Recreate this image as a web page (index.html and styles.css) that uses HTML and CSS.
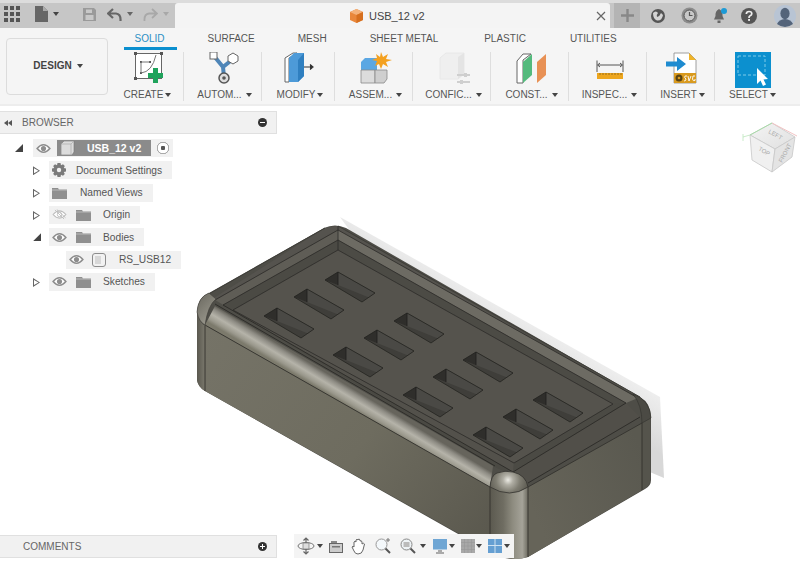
FILE: index.html
```html
<!DOCTYPE html>
<html lang="en">
<head>
<meta charset="utf-8">
<title>USB_12 v2</title>
<link rel="stylesheet" href="styles.css">
</head>
<body>
<svg class="defs" width="0" height="0" aria-hidden="true">
  <defs>
    <symbol id="eye" viewBox="0 0 16 12">
      <path d="M1 6 Q8 -2 15 6 Q8 14 1 6Z" fill="#fff" stroke="#8d8d8d" stroke-width="1.6"/>
      <circle cx="8" cy="6" r="2.8" fill="#8d8d8d"/>
    </symbol>
    <symbol id="eye-off" viewBox="0 0 16 12">
      <path d="M1 6 Q8 -2 15 6 Q8 14 1 6Z" fill="#fff" stroke="#bdbdbd" stroke-width="1.2"/>
      <circle cx="8" cy="6" r="2.4" fill="none" stroke="#bdbdbd"/>
      <path d="M3 1 L13 11 M5 0.5 L14.5 9.5" stroke="#bdbdbd" stroke-width="1"/>
    </symbol>
    <symbol id="folder" viewBox="0 0 15 12">
      <path d="M0 1 H6 L7 2.5 H15 V12 H0Z" fill="#8f8f8f"/>
      <path d="M0 3 H15" stroke="#c4c4c4" stroke-width=".8"/>
    </symbol>
    <symbol id="slot" viewBox="0 0 52 32" overflow="visible">
      <path d="M0 10 L13 2 L50 23 L37 32Z" fill="#3f3e3a"/>
      <path d="M0 10 L13 2 V15Z" fill="#2f2e2b"/>
      <path d="M13 2 L50 23 L44 27.500 L13 15Z" fill="#4a4945"/>
      <path d="M0 10 L13 2 L50 23 L37 32Z" fill="none" stroke="#232320" stroke-width=".8"/>
      <path d="M13 2 V15" stroke="#1f1f1c" stroke-width=".8"/>
    </symbol>
  </defs>
</svg>

<header class="topbar">
  <div class="quick">
    <svg class="ic-grid" width="16" height="16" viewBox="0 0 16 16"><g fill="#555"><rect x="0" y="0" width="4" height="4"/><rect x="6" y="0" width="4" height="4"/><rect x="12" y="0" width="4" height="4"/><rect x="0" y="6" width="4" height="4"/><rect x="6" y="6" width="4" height="4"/><rect x="12" y="6" width="4" height="4"/><rect x="0" y="12" width="4" height="4"/><rect x="6" y="12" width="4" height="4"/><rect x="12" y="12" width="4" height="4"/></g></svg>
    <svg class="ic-file" width="13" height="16" viewBox="0 0 13 16"><path d="M0 0 H8 L13 5 V16 H0Z" fill="#666"/><path d="M8 0 V5 H13" fill="#aaa"/></svg>
    <span class="caret dark c-file"></span>
    <svg class="ic-save" width="13" height="13" viewBox="0 0 13 13"><path d="M0 0 H11 L13 2 V13 H0Z" fill="#9a9a9a"/><rect x="3" y="1.500" width="6" height="3.500" fill="#c8c8c8"/><rect x="2.500" y="7" width="8" height="5" fill="#c8c8c8"/></svg>
    <svg class="ic-undo" width="15" height="13" viewBox="0 0 15 13"><path d="M6 1 L1 5.500 L6 10 M1 5.500 H9 Q14 6 13.500 13" fill="none" stroke="#666" stroke-width="2.200"/></svg>
    <span class="caret c-undo"></span>
    <svg class="ic-redo" width="15" height="13" viewBox="0 0 15 13"><path d="M9 1 L14 5.500 L9 10 M14 5.500 H6 Q1 6 1.500 13" fill="none" stroke="#a8a8a8" stroke-width="1.800"/></svg>
    <span class="caret faint c-redo"></span>
  </div>
  <div class="doc-tab">
    <svg class="ic-cube" width="13" height="14" viewBox="0 0 13 14"><path d="M6.500 0 L13 3 V11 L6.500 14 L0 11 V3Z" fill="#e9873a"/><path d="M6.500 0 L13 3 L6.500 6 L0 3Z" fill="#f4b27a"/><path d="M6.500 6 L13 3 V11 L6.500 14Z" fill="#d66f1e"/></svg>
    <span class="doc-title">USB_12 v2</span>
    <svg class="ic-close" width="10" height="10" viewBox="0 0 10 10"><path d="M1 1 L9 9 M9 1 L1 9" stroke="#666" stroke-width="1.200"/></svg>
  </div>
  <div class="new-tab"><svg width="13" height="13" viewBox="0 0 13 13"><path d="M6.500 0 V13 M0 6.500 H13" stroke="#888" stroke-width="2.400"/></svg></div>
  <div class="account">
    <svg width="16" height="16" viewBox="0 0 16 16"><circle cx="8" cy="8" r="7" fill="#555"/><path d="M3 5 Q6 2 8 5 Q6 7 7 9 Q10 8 11 5 L13 7 Q12 13 7 12.500 Q3 11 3 5Z" fill="#d4d4d4"/></svg>
    <svg class="gap-clock" width="17" height="17" viewBox="0 0 17 17"><circle cx="8.500" cy="8.500" r="8" fill="#8c8c8c"/><circle cx="8.500" cy="8.500" r="5.500" fill="#c8c8c8" stroke="#555" stroke-width="1"/><path d="M8.500 5 V8.500 H11.500" fill="none" stroke="#555" stroke-width="1.200"/></svg>
    <svg class="gap-bell" width="15" height="17" viewBox="0 0 15 17"><path d="M6 2 Q2 4 2.500 9 L1 12.500 H11 L9.500 9 Q10 4 6 2Z" fill="#666"/><rect x="4.500" y="13.500" width="3" height="2.500" fill="#666"/><circle cx="11" cy="4" r="3" fill="#1c9ad6"/></svg>
    <svg class="gap-help" width="16" height="16" viewBox="0 0 16 16"><circle cx="8" cy="8" r="8" fill="#555"/><path d="M5.300 6 Q5.500 3.500 8 3.500 Q10.800 3.500 10.800 5.800 Q10.800 7.300 8.800 8 Q8 8.400 8 10" fill="none" stroke="#eee" stroke-width="1.700"/><rect x="7.100" y="11" width="1.900" height="1.900" fill="#eee"/></svg>
    <svg class="gap-avatar" width="22" height="24" viewBox="0 0 22 24"><circle cx="11" cy="12" r="11" fill="#b8c4d4"/><ellipse cx="11" cy="9.500" rx="4.600" ry="5.800" fill="#54647a"/><path d="M3 20 Q5 15.500 11 15 Q17 15.500 19 20 Q11 26 3 20Z" fill="#54647a"/></svg>
  </div>
</header>

<section class="ribbon">
  <button class="design">DESIGN<span class="caret dark c-design"></span></button>
  <div class="ribbon-main">
    <nav class="tabs">
      <span class="tab active">SOLID</span>
      <span class="tab">SURFACE</span>
      <span class="tab">MESH</span>
      <span class="tab">SHEET METAL</span>
      <span class="tab t-plastic">PLASTIC</span>
      <span class="tab t-util">UTILITIES</span>
    </nav>
    <div class="groups">
      <div class="group">
        <svg class="tool" width="36" height="32" viewBox="0 0 36 32">
          <rect x="5.500" y="1.500" width="26" height="25" fill="#fff" stroke="#666"/>
          <g fill="#555"><rect x="4" y="0" width="3" height="3"/><rect x="30" y="0" width="3" height="3"/><rect x="4" y="25" width="3" height="3"/><rect x="10" y="9" width="2" height="2"/><rect x="10" y="20" width="2" height="2"/><rect x="19" y="9" width="2" height="2"/></g>
          <path d="M11 10 V21 M11 10 H20 M11 21 Q22 20 26 3" fill="none" stroke="#777"/>
          <path d="M23 16 h5 v5 h5 v5 h-5 v5 h-5 v-5 h-5 v-5 h5Z" fill="#1fa35c"/>
        </svg>
        <span class="label">CREATE<span class="caret dark"></span></span>
      </div>
      <div class="group">
        <svg class="tool" width="36" height="32" viewBox="0 0 36 32">
          <path d="M7 4 L16 15 L26 7 M16 15 L17 25" fill="none" stroke="#4f86b8" stroke-width="4"/>
          <rect x="3" y="0" width="7" height="7" fill="#fff" stroke="#666"/>
          <path d="M26 1 L31 4 L31 9 L26 12 L21 9 L21 4Z" fill="#fff" stroke="#666"/>
          <circle cx="17" cy="26" r="5" fill="#ddd" stroke="#555" stroke-width="1.500"/><circle cx="17" cy="26" r="1.800" fill="#555"/>
        </svg>
        <span class="label">AUTOM...<span class="caret dark wide"></span></span>
      </div>
      <div class="group">
        <svg class="tool" width="36" height="32" viewBox="0 0 36 32">
          <path d="M7 30 H3 V6 L11 1 H15 L7 6Z" fill="#fff" stroke="#666"/>
          <path d="M7 6 L12 1 H22 V24 L16 30 H7Z" fill="#4d9ad8"/>
          <path d="M16 8 L22 1 V24 L16 30Z" fill="#2f7fc0"/>
          <path d="M22 15 H30 M28 12.500 L31 15 L28 17.500" fill="#333" stroke="#333" stroke-width="1.200"/>
        </svg>
        <span class="label">MODIFY<span class="caret dark"></span></span>
      </div>
      <div class="group">
        <svg class="tool" width="36" height="32" viewBox="0 0 36 32">
          <path d="M3 10 L7 6 H19 V18 H3Z" fill="#5ba7e3"/>
          <path d="M3 18 H17 V31 H3Z" fill="#dcdcdc" stroke="#888" stroke-width=".8"/>
          <path d="M17 18 H29 V27 L26 31 H17Z" fill="#cfcfcf" stroke="#888" stroke-width=".8"/>
          <path d="M23 0 L25 5 L30 2 L28 7 L34 8 L28 10 L30 15 L25 12 L23 17 L21 12 L17 14 L19 9 L14 8 L19 6 L18 2 L22 5Z" fill="#f4a11f"/>
        </svg>
        <span class="label">ASSEM...<span class="caret dark wide"></span></span>
      </div>
      <div class="group">
        <svg class="tool" width="36" height="32" viewBox="0 0 36 32">
          <path d="M4 6 L10 1 H28 V22 L22 27 H4Z" fill="#efefef" stroke="#e8e8e8"/>
          <path d="M22 5 L28 1 V22 L22 27Z" fill="#e4e4e4"/>
          <path d="M21 23 H34 M21 30 H34" stroke="#cfcfcf" stroke-width="2"/><rect x="28" y="21" width="3" height="4" fill="#cfcfcf"/><rect x="24" y="28" width="3" height="4" fill="#cfcfcf"/>
        </svg>
        <span class="label">CONFIC...<span class="caret dark wide"></span></span>
      </div>
      <div class="group">
        <svg class="tool" width="36" height="32" viewBox="0 0 36 32">
          <path d="M3 9 L9 2 H17 L9 8 V31 H3Z" fill="#fff" stroke="#666"/>
          <path d="M9 10 L18 2 V23 L9 31Z" fill="#54ba7d"/>
          <path d="M23 10 L32 2 V23 L23 31Z" fill="#e89155"/>
        </svg>
        <span class="label">CONST...<span class="caret dark wide"></span></span>
      </div>
      <div class="group">
        <svg class="tool" width="36" height="32" viewBox="0 0 36 32">
          <path d="M5 8.500 V20 M31 8.500 V20" stroke="#555"/>
          <path d="M6 13 H30 M8 11 L5.500 13 L8 15 M28 11 L30.500 13 L28 15" fill="none" stroke="#555"/>
          <rect x="5" y="21" width="26" height="6" fill="#eda61e"/>
          <path d="M8 21 V23 M11 21 V23 M14 21 V23 M17 21 V23 M20 21 V23 M23 21 V23 M26 21 V23 M29 21 V23" stroke="#8a6312" stroke-width=".8"/>
        </svg>
        <span class="label">INSPEC...<span class="caret dark wide"></span></span>
      </div>
      <div class="group">
        <svg class="tool" width="36" height="32" viewBox="0 0 36 32">
          <path d="M9 1 H24 L31 8 V31 H9Z" fill="#fff" stroke="#888" stroke-width=".8"/>
          <path d="M24 1 L31 8 H24Z" fill="#f0b429"/>
          <rect x="9" y="21" width="22" height="10" fill="#d99a1e"/>
          <circle cx="14" cy="26" r="3.500" fill="#5a4413"/><circle cx="14" cy="26" r="1.300" fill="#d99a1e"/>
          <path d="M19 29 Q21 29 21 27 Q19 26 20 24 H22 M23 24 L24 29 L26 24 M30 24 H28 L27.500 27 Q28 29.500 30 28.500 V27" fill="none" stroke="#fff" stroke-width=".9"/>
          <path d="M1 9.500 H12 V5 L21 12 L12 19 V14.500 H1Z" fill="#1e8bd0"/>
        </svg>
        <span class="label">INSERT<span class="caret dark"></span></span>
      </div>
      <div class="group last">
        <svg class="tool select" width="36" height="36" viewBox="0 0 36 36">
          <rect width="36" height="36" fill="#0c90cf"/>
          <rect x="3" y="4" width="27" height="19" fill="none" stroke="#7fcbe9" stroke-width="1" stroke-dasharray="3 2"/>
          <path d="M22 16 V32 L25.500 28.500 L28 34 L31 32.500 L28.500 27.500 L33 27Z" fill="#fff"/>
        </svg>
        <span class="label">SELECT<span class="caret dark"></span></span>
      </div>
    </div>
  </div>
</section>

<main class="workspace">
  <svg class="model" width="800" height="456" viewBox="0 106 800 456" aria-label="USB_12 3D model">
    <defs>
      <linearGradient id="shadow" gradientUnits="userSpaceOnUse" x1="500" y1="290" x2="470" y2="340"><stop offset="0" stop-color="#f2f2f2"/><stop offset="1" stop-color="#d8d8d8"/></linearGradient>
      <linearGradient id="faceL" gradientUnits="userSpaceOnUse" x1="205" y1="330" x2="490" y2="540"><stop offset="0" stop-color="#757367"/><stop offset=".55" stop-color="#6e6c5f"/><stop offset="1" stop-color="#5a584e"/></linearGradient>
      <linearGradient id="faceR" gradientUnits="userSpaceOnUse" x1="528" y1="500" x2="642" y2="450"><stop offset="0" stop-color="#666459"/><stop offset="1" stop-color="#5a5950"/></linearGradient>
      <linearGradient id="band" gradientUnits="userSpaceOnUse" x1="215" y1="306" x2="206" y2="321"><stop offset="0" stop-color="#66645c"/><stop offset=".2" stop-color="#8e8c84"/><stop offset=".5" stop-color="#b5b3a9"/><stop offset=".8" stop-color="#9a988c"/><stop offset="1" stop-color="#7c7a6c"/></linearGradient>
      <linearGradient id="col" gradientUnits="userSpaceOnUse" x1="490" y1="0" x2="528" y2="0"><stop offset="0" stop-color="#5b594f"/><stop offset=".35" stop-color="#6f6d62"/><stop offset=".6" stop-color="#8e8c80"/><stop offset=".85" stop-color="#a5a399"/><stop offset="1" stop-color="#6d6b60"/></linearGradient>
      <radialGradient id="cap" gradientUnits="userSpaceOnUse" cx="508" cy="480" r="20"><stop offset="0" stop-color="#ecebe4"/><stop offset=".25" stop-color="#b0aea4"/><stop offset=".6" stop-color="#7f7d72"/><stop offset="1" stop-color="#5e5c53"/></radialGradient>
      <linearGradient id="colL" gradientUnits="userSpaceOnUse" x1="197" y1="0" x2="206" y2="0"><stop offset="0" stop-color="#5a584f"/><stop offset="1" stop-color="#7e7c70"/></linearGradient>
      <linearGradient id="capL" gradientUnits="userSpaceOnUse" x1="197" y1="300" x2="216" y2="318"><stop offset="0" stop-color="#706e65"/><stop offset="1" stop-color="#9c9a8f"/></linearGradient>
      <linearGradient id="cubeTop" x1="0" y1="0" x2="1" y2="1"><stop offset="0" stop-color="#f4f4f4"/><stop offset="1" stop-color="#e0e0e0"/></linearGradient>
    </defs>

    <path d="M340 217 L660 397 L664 478 L645 470 L400 300Z" fill="url(#shadow)"/>

    <path d="M197 312 Q198 297 209 293 L324 228 Q335 223 346 228 L640 397 Q651 403 651 418 V480 Q651 486 645 489 L528 557 Q510 563 490 552 L205 391 Q198 387 197 380Z" fill="#4e4d47"/>

    <path d="M205 325 L490 487 V551 L205 391Z" fill="url(#faceL)"/>
    <path d="M528 487 L642 423 V490 L528 557Z" fill="url(#faceR)"/>
    <path d="M197 312 Q199 322 205 326 V391 Q198 387 197 380Z" fill="url(#colL)"/>
    <path d="M642 423 L650 416 V481 Q650 486 642 490Z" fill="#55544c"/>
    <path d="M490 487 H528 V557 Q510 563 490 551Z" fill="url(#col)"/>

    <path d="M209 301 L215 300 L338 230 L338 250 L233 310 L514 463 L613 404 L633 396 L338 226 L325 228Z" fill="#55534e"/>
    <path d="M215 300 L338 230 V240 L223 305Z" fill="#5f5d56"/>
    <path d="M223 305 L338 240 V250 L233 310Z" fill="#4b4a44"/>
    <path d="M338 230 L638 398 L626 403 L338 240Z" fill="#6d6b63"/>
    <path d="M338 240 L626 403 L613 404 L338 250Z" fill="#4c4b45"/>
    <path d="M338 250 L613 404 L514 463 L233 310Z" fill="#55534d"/>
    <path d="M215 300 L223 305 L513 472 L528 483 L497 468Z" fill="#4a4943"/>
    <path d="M223 305 L233 310 L514 463 L513 472Z" fill="#53514b"/>
    <path d="M514 463 L613 404 L626 403 L513 472Z" fill="#4b4a44"/>
    <path d="M513 472 L626 403 L640 417 L528 483Z" fill="#514f49"/>
    <path d="M215 306 L493 466 L490 487 L205 325Z" fill="url(#band)"/>

    <path d="M338 226 L640 397 M207 295 L325 228" fill="none" stroke="#3f3e39" stroke-width="1"/>
    <path d="M215 300 L338 230 L638 398 M223 305 L338 240 L626 403 M233 310 L338 250 L613 404 L514 463 L233 310 M338 226 V250" fill="none" stroke="#2c2b28" stroke-width=".8"/>
    <path d="M215 304 L495 466 M223 305 L513 472 L626 403 M528 483 L640 417" fill="none" stroke="#2b2a27" stroke-width=".9"/>
    <path d="M205 325 L490 487 M528 487 L642 423 M205 326 V391 M642 423 V490 M490 487 V551 M528 487 V557" fill="none" stroke="#33322e" stroke-width=".9"/>

    <path d="M197 312 Q198 297 209 293 L216 299 Q208 305 205 325 Q199 322 197 312Z" fill="url(#capL)" stroke="#3f3e39" stroke-width=".6"/>
    <path d="M633 394 Q650 400 651 418 L642 423 Q642 405 633 394Z" fill="#4b4a44" stroke="#33322e" stroke-width=".6"/>
    <path d="M490 487 Q491 475 497 473 Q505 470 513 472 Q526 475 528 487 Q510 499 490 487Z" fill="url(#cap)" stroke="#33322e" stroke-width=".8"/>

    <use href="#slot" x="325" y="270" width="52" height="32"/>
    <use href="#slot" x="294" y="287" width="52" height="32"/>
    <use href="#slot" x="264" y="306" width="52" height="32"/>
    <use href="#slot" x="394" y="311" width="52" height="32"/>
    <use href="#slot" x="364" y="328" width="52" height="32"/>
    <use href="#slot" x="333" y="345" width="52" height="32"/>
    <use href="#slot" x="463" y="350" width="52" height="32"/>
    <use href="#slot" x="433" y="367" width="52" height="32"/>
    <use href="#slot" x="403" y="385" width="52" height="32"/>
    <use href="#slot" x="533" y="390" width="52" height="32"/>
    <use href="#slot" x="503" y="407" width="52" height="32"/>
    <use href="#slot" x="473" y="425" width="52" height="32"/>

    <g class="viewcube">
      <path d="M750 135 L772 123 L795 137 L775 149Z" fill="url(#cubeTop)" stroke="#c8c8c8" stroke-width=".8"/>
      <path d="M750 135 L775 149 L772 172 L752 160Z" fill="#f0f0f0" stroke="#c8c8c8" stroke-width=".8"/>
      <path d="M775 149 L795 137 L792 157 L772 172Z" fill="#e4e4e4" stroke="#c8c8c8" stroke-width=".8"/>
      <path d="M750 135 L772 123" stroke="#a8dca8" stroke-width="1"/>
      <path d="M772 123 L797 136" stroke="#f2c4c4" stroke-width="1"/>
      <path d="M750 135 L743 137 M743 134 V141" stroke="#bce6bc" stroke-width=".8" fill="none"/>
      <text class="cube-text" transform="translate(768 133) rotate(28)">LEFT</text>
      <text class="cube-text" transform="translate(758 150) rotate(30)">TOP</text>
      <text class="cube-text" transform="translate(782 163) rotate(-62)">FRONT</text>
    </g>
  </svg>

  <div class="side">
    <section class="panel browser">
      <div class="panel-head">
        <span class="collapse"><i></i><i></i></span>
        <span class="panel-title">BROWSER</span>
        <span class="minus"></span>
      </div>
      <ul class="tree">
        <li class="row lv1">
          <span class="arrow open"></span>
          <span class="pill root">
            <svg class="sym-eye" width="15" height="11"><use href="#eye"/></svg>
            <span class="root-name">
              <svg width="14" height="14" viewBox="0 0 14 14"><path d="M0 3 L3 0 H13 V11 L11 14 H0Z" fill="#dcdcdc" stroke="#777" stroke-width=".6"/><path d="M0 3 H10 V14 M10 3 L13 0" fill="none" stroke="#aaa" stroke-width=".7"/></svg>
              <b>USB_12 v2</b>
            </span>
            <span class="radio"></span>
          </span>
        </li>
        <li class="row lv2">
          <span class="arrow"></span>
          <span class="pill">
            <svg class="sym-gear" width="14" height="14" viewBox="0 0 14 14"><path d="M5.500 0 H8.500 L9 2.200 L11 1.200 L12.800 3 L11.800 5 L14 5.500 V8.500 L11.800 9 L12.800 11 L11 12.800 L9 11.800 L8.500 14 H5.500 L5 11.800 L3 12.800 L1.200 11 L2.200 9 L0 8.500 V5.500 L2.200 5 L1.200 3 L3 1.200 L5 2.200Z" fill="#7a7a7a"/><circle cx="7" cy="7" r="2.200" fill="#f0f0f0"/></svg>
            <span class="name n-doc">Document Settings</span>
          </span>
        </li>
        <li class="row lv2">
          <span class="arrow"></span>
          <span class="pill">
            <svg class="sym-folder-a" width="15" height="12"><use href="#folder"/></svg>
            <span class="name n-views">Named Views</span>
          </span>
        </li>
        <li class="row lv2">
          <span class="arrow"></span>
          <span class="pill">
            <svg class="sym-eye" width="15" height="11"><use href="#eye-off"/></svg>
            <svg class="sym-folder" width="15" height="12"><use href="#folder"/></svg>
            <span class="name n-sub">Origin</span>
          </span>
        </li>
        <li class="row lv2">
          <span class="arrow open"></span>
          <span class="pill">
            <svg class="sym-eye" width="15" height="11"><use href="#eye"/></svg>
            <svg class="sym-folder" width="15" height="12"><use href="#folder"/></svg>
            <span class="name n-sub">Bodies</span>
          </span>
        </li>
        <li class="row lv3">
          <span class="pill">
            <svg class="sym-eye" width="15" height="11"><use href="#eye"/></svg>
            <svg class="sym-body" width="14" height="14" viewBox="0 0 14 14"><rect x=".5" y=".5" width="13" height="13" rx="2.500" fill="#f2f2f2" stroke="#8d8d8d"/><rect x="3" y="3" width="6" height="8" fill="#d8d8d8"/></svg>
            <span class="name n-body">RS_USB12</span>
          </span>
        </li>
        <li class="row lv2">
          <span class="arrow"></span>
          <span class="pill">
            <svg class="sym-eye" width="15" height="11"><use href="#eye"/></svg>
            <svg class="sym-folder" width="15" height="12"><use href="#folder"/></svg>
            <span class="name n-sub">Sketches</span>
          </span>
        </li>
      </ul>
    </section>
    <section class="panel comments">
      <div class="panel-head">
        <span class="panel-title tight">COMMENTS</span>
        <span class="plus"></span>
      </div>
    </section>
  </div>

  <div class="navbar">
    <svg width="18" height="18" viewBox="0 0 18 18"><ellipse cx="9" cy="9" rx="8" ry="3.500" fill="none" stroke="#777"/><path d="M9 1 V17 M6.500 3.500 L9 1 L11.500 3.500 M6.500 14.500 L9 17 L11.500 14.500" fill="none" stroke="#666" stroke-width="1.200"/><rect x="6" y="6" width="6" height="6" fill="#ddd" stroke="#777" stroke-width=".7"/></svg>
    <span class="caret dark nc"></span>
    <svg class="n1" width="14" height="13" viewBox="0 0 14 13"><rect x=".5" y="3.500" width="13" height="9" fill="#ccc" stroke="#666"/><path d="M2 1 H8 V3 H2Z" fill="#888"/><rect x="3" y="6" width="8" height="1.500" fill="#777"/></svg>
    <svg class="n2" width="16" height="17" viewBox="0 0 16 17"><path d="M3 9 V4 Q4 2.500 5 4 V2 Q6 0.500 7 2 V1.500 Q8.500 0.500 9 2 V3 Q10.500 2 11 4 V6 Q12.500 4.500 13.500 6 L12 12 Q11 16 7 16 Q4 16 3 13 L1 9 Q2 7.500 3 9Z" fill="#fff" stroke="#666"/></svg>
    <svg class="n3" width="16" height="16" viewBox="0 0 16 16"><circle cx="6.500" cy="6.500" r="5.500" fill="#f4f8fb" stroke="#999"/><path d="M10.500 10.500 L15 15" stroke="#555" stroke-width="2"/><path d="M13 0 V4 M11 2 H15" stroke="#777"/></svg>
    <svg class="n4" width="16" height="16" viewBox="0 0 16 16"><circle cx="6.500" cy="6.500" r="5.500" fill="#eef3f6" stroke="#888"/><rect x="3.500" y="4" width="6" height="5" fill="#bbb"/><path d="M10.500 10.500 L15 15" stroke="#555" stroke-width="2"/></svg>
    <span class="caret dark nc-z"></span>
    <svg class="n5" width="14" height="15" viewBox="0 0 14 15"><rect width="14" height="10.500" fill="#6fa6d4"/><path d="M5 11 H9 V13 H11 V15 H3 V13 H5Z" fill="#aaa"/></svg>
    <span class="caret dark nc-s"></span>
    <svg class="n6" width="14" height="14" viewBox="0 0 14 14"><rect width="14" height="14" fill="#a8a8a8"/><path d="M0 3.500 H14 M0 7 H14 M0 10.500 H14 M3.500 0 V14 M7 0 V14 M10.500 0 V14" stroke="#949494" stroke-width=".5"/></svg>
    <span class="caret dark nc-t"></span>
    <svg class="n7" width="14" height="14" viewBox="0 0 14 14"><rect width="14" height="14" fill="#659fd2"/><path d="M7 0 V14 M0 6.500 H14" stroke="#cfe2f1"/></svg>
    <span class="caret dark nc-s"></span>
  </div>
</main>
</body>
</html>
```
FILE: styles.css
```css
* { box-sizing: border-box; }
html, body { margin: 0; padding: 0; }
body {
  width: 800px;
  height: 562px;
  overflow: hidden;
  display: flex;
  flex-direction: column;
  background: #fff;
  font-family: "Liberation Sans", Arial, sans-serif;
  font-size: 10px;
  color: #555;
}
svg { display: block; flex: none; }
.defs { position: absolute; }

.caret {
  display: inline-block;
  width: 0;
  height: 0;
  border-left: 3px solid transparent;
  border-right: 3px solid transparent;
  border-top: 4px solid #666;
  margin-left: 2px;
  vertical-align: 1px;
}
.caret.dark { border-top-color: #444; }
.caret.faint { border-top-color: #a8a8a8; }
.caret.wide { margin-left: 4px; }

/* top bar */
.topbar {
  height: 28px;
  flex: none;
  display: flex;
  background: #c6c6c6;
  border-top: 3px solid #dcdcdc;
}
.quick { width: 175px; display: flex; align-items: center; padding-left: 4px; padding-bottom: 3px; }
.ic-file { margin-left: 15px; }
.c-file { margin-left: 5px; }
.ic-save { margin-left: 24px; }
.ic-undo { margin-left: 11px; }
.c-undo { margin-left: 5px; }
.ic-redo { margin-left: 10px; }
.c-redo { margin-left: 5px; }
.doc-tab {
  width: 435px;
  display: flex;
  align-items: center;
  background: #f4f4f4;
  border-radius: 3px 3px 0 0;
  padding-left: 175px;
}
.doc-title { margin-left: 6px; font-size: 11px; color: #444; }
.ic-close { margin-left: 171px; }
.new-tab {
  width: 26px;
  margin-left: 4px;
  background: #b4b4b4;
  display: flex;
  align-items: center;
  justify-content: center;
}
.account { display: flex; align-items: center; padding-left: 10px; }
.gap-clock { margin-left: 15px; }
.gap-bell { margin-left: 15px; }
.gap-help { margin-left: 13px; }
.gap-avatar { margin-left: 17px; }

/* ribbon */
.ribbon {
  height: 78px;
  flex: none;
  display: flex;
  background: #f5f5f5;
  border-bottom: 2px solid #ededed;
}
.design {
  width: 102px;
  height: 57px;
  margin: 10px 0 0 6px;
  background: #f5f5f5;
  border: 1px solid #dcdcdc;
  border-radius: 4px;
  font: bold 10px "Liberation Sans", Arial, sans-serif;
  color: #444;
  padding: 0 0 2px 2px;
}
.c-design { margin-left: 5px; }
.ribbon-main { flex: 1; display: flex; flex-direction: column; }
.tabs { height: 22px; display: flex; gap: 20px; padding-left: 16px; }
.tab {
  padding: 5px 11.500px 0;
  line-height: 12px;
  color: #555;
  white-space: nowrap;
}
.tab.active {
  color: #2a8fc4;
  border-bottom: 3px solid #0a8fcf;
  margin-right: -1px;
  padding-left: 10.500px;
  padding-right: 12.500px;
}
.tab.t-plastic { margin-left: 3px; }
.tab.t-util { margin-left: 1px; }
.groups {
  height: 50px;
  display: grid;
  grid-template-columns: 76px 78px 73px 78px 78px 78px 78px 68px 1fr;
  padding-top: 2px;
}
.group {
  border-right: 1px solid #dedede;
  display: flex;
  flex-direction: column;
  align-items: center;
  height: 49px;
  justify-content: flex-end;
  padding-left: 4px;
}
.group.last { border-right: 0; padding: 0 10px 0 0; }
.tool { margin-bottom: 5px; }
.tool.select { margin-top: -4px; margin-bottom: 1px; }
.label { line-height: 12px; white-space: nowrap; color: #555; }

/* workspace */
.workspace { flex: 1; position: relative; overflow: hidden; }
.model { position: absolute; left: 0; top: 0; }
.cube-text { font-size: 6px; fill: #aaa; font-family: "Liberation Sans", Arial, sans-serif; }

.side {
  position: relative;
  width: 277px;
  height: 100%;
  display: flex;
  flex-direction: column;
  justify-content: space-between;
  padding: 5px 0 4px;
}
.panel-head {
  height: 23px;
  display: flex;
  align-items: center;
  background: #f1f1f1;
  border: 1px solid #e0e0e0;
  border-left: 0;
}
.collapse { display: flex; margin-left: 4px; width: 18px; }
.collapse i {
  width: 0;
  height: 0;
  border-top: 3px solid transparent;
  border-bottom: 3px solid transparent;
  border-right: 4px solid #555;
}
.panel-title { color: #666; flex: 1; }
.panel-title.tight { padding-left: 23px; }
.minus, .plus {
  width: 9px;
  height: 9px;
  border-radius: 50%;
  background: #333;
  margin-right: 9px;
  position: relative;
}
.minus::after, .plus::after {
  content: "";
  position: absolute;
  left: 2px;
  top: 4px;
  width: 5px;
  height: 1px;
  background: #fff;
}
.plus::before {
  content: "";
  position: absolute;
  left: 4px;
  top: 2px;
  width: 1px;
  height: 5px;
  background: #fff;
}

.tree {
  list-style: none;
  margin: 5px 0 0;
  padding: 0;
  display: flex;
  flex-direction: column;
  gap: 4.330px;
}
.row { height: 18px; display: flex; align-items: center; position: relative; color: #555; font-size: 10.200px; }
.row.lv1 { padding-left: 33px; }
.row.lv2 { padding-left: 49px; }
.row.lv3 { padding-left: 66px; }
.arrow {
  position: absolute;
  top: 5px;
  left: 33px;
  width: 7px;
  height: 9px;
  clip-path: polygon(0 0, 100% 50%, 0 100%, 0 0, 1px 2px, 1px 7px, 5.500px 4.500px, 1px 2px);
  background: #666;
}
.arrow.open {
  width: 8px;
  height: 8px;
  top: 5px;
  clip-path: polygon(100% 0, 100% 100%, 0 100%);
  background: #444;
}
.lv1 .arrow { left: 15px; }
.pill {
  display: flex;
  align-items: center;
  height: 18px;
  background: #f1f1f1;
  padding-left: 3px;
  padding-right: 10px;
}
.pill.root { padding-right: 2px; }
.root-name {
  display: flex;
  align-items: center;
  height: 16px;
  width: 94px;
  margin-left: 6px;
  padding-left: 4px;
  background: #8b8b8b;
  color: #fff;
}
.root-name b { margin-left: 12px; font-size: 10.500px; font-weight: bold; }
.radio {
  width: 16px;
  height: 16px;
  margin-left: 4px;
  border-radius: 50%;
  background: radial-gradient(circle, #555 0 2px, #fff 2.500px 5px, #aaa 5.500px 6px, transparent 6.500px);
}
.sym-folder { margin-left: 9px; }
.sym-body { margin-left: 8px; }
.n-doc { margin-left: 10px; }
.n-views { margin-left: 13px; }
.n-sub { margin-left: 12px; }
.n-body { margin-left: 13px; }

/* navigation bar */
.navbar {
  position: absolute;
  left: 294px;
  top: 428px;
  width: 220px;
  height: 24px;
  background: #f4f4f4;
  display: flex;
  align-items: center;
  padding-left: 3px;
}
.nc { margin-left: 2px; }
.nc-z { margin-left: 4px; }
.nc-s { margin-left: 2px; }
.nc-t { margin-left: 1px; }
.n1 { margin-left: 6px; }
.n2 { margin-left: 8px; }
.n3 { margin-left: 8px; }
.n4 { margin-left: 9px; }
.n5 { margin-left: 7px; }
.n6 { margin-left: 6px; }
.n7 { margin-left: 6px; }
```
